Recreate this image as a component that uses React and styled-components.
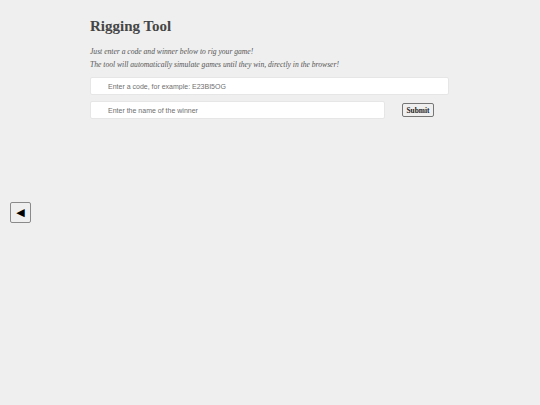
import React, { useState } from 'react';
import styled, { createGlobalStyle } from 'styled-components';

const GlobalStyle = createGlobalStyle`
  html, body {
    margin: 0;
    padding: 0;
    background: #efefef;
  }
  body {
    font-family: "Liberation Serif", "Times New Roman", serif;
  }
`;

const Page = styled.div`
  min-height: 405px;
  background: #efefef;
  padding: 16px 0 0 90px;
  box-sizing: border-box;
`;

const Panel = styled.div`
  width: 359px;
  display: flex;
  flex-direction: column;
`;

const Title = styled.h1`
  margin: 0;
  font-size: 15px;
  line-height: 20px;
  font-weight: bold;
  color: #454545;
`;

const Intro = styled.p`
  margin: 9px 0 0;
  font-size: 7.6px;
  line-height: 13px;
  font-style: italic;
  color: #555;
`;

const Form = styled.form`
  margin-top: 6px;
  display: flex;
  flex-direction: column;
  gap: 6px;
`;

const Row = styled.div`
  display: flex;
  align-items: center;
`;

const Field = styled.input`
  box-sizing: border-box;
  width: ${(props) => props.$width || '100%'};
  height: 18px;
  padding: 0 0 0 17px;
  border: 1px solid #e6e6e6;
  border-radius: 2px;
  background: #ffffff;
  font-family: "Liberation Sans", Arial, sans-serif;
  font-size: 7px;
  color: #333;
  outline: none;

  &::placeholder {
    color: #6f6f6f;
  }
`;

const SubmitButton = styled.button`
  margin-left: 17px;
  box-sizing: border-box;
  width: 32px;
  height: 14px;
  padding: 0;
  border: 1px solid #767676;
  border-radius: 2px;
  background: #efefef;
  font-family: "Liberation Serif", "Times New Roman", serif;
  font-size: 7.4px;
  font-weight: bold;
  color: #222;
  cursor: pointer;
`;

const BackButton = styled.button`
  position: fixed;
  left: 10px;
  top: 202px;
  box-sizing: border-box;
  width: 21px;
  height: 21px;
  padding: 0;
  border: 1px solid #8a8a8a;
  border-radius: 2px;
  background: #efefef;
  color: #000;
  font-family: "DejaVu Sans", sans-serif;
  font-size: 11px;
  line-height: 19px;
  cursor: pointer;
`;

export default function App() {
  const [code, setCode] = useState('');
  const [winner, setWinner] = useState('');

  return (
    <>
      <GlobalStyle />
      <Page>
        <Panel>
          <Title>Rigging Tool</Title>
          <Intro>
            Just enter a code and winner below to rig your game!
            <br />
            The tool will automatically simulate games until they win, directly in the browser!
          </Intro>
          <Form onSubmit={(e) => e.preventDefault()}>
            <Field
              placeholder="Enter a code, for example: E23BI5OG"
              value={code}
              onChange={(e) => setCode(e.target.value)}
            />
            <Row>
              <Field
                $width="295px"
                placeholder="Enter the name of the winner"
                value={winner}
                onChange={(e) => setWinner(e.target.value)}
              />
              <SubmitButton type="submit">Submit</SubmitButton>
            </Row>
          </Form>
        </Panel>
      </Page>
      <BackButton aria-label="back">◀</BackButton>
    </>
  );
}
